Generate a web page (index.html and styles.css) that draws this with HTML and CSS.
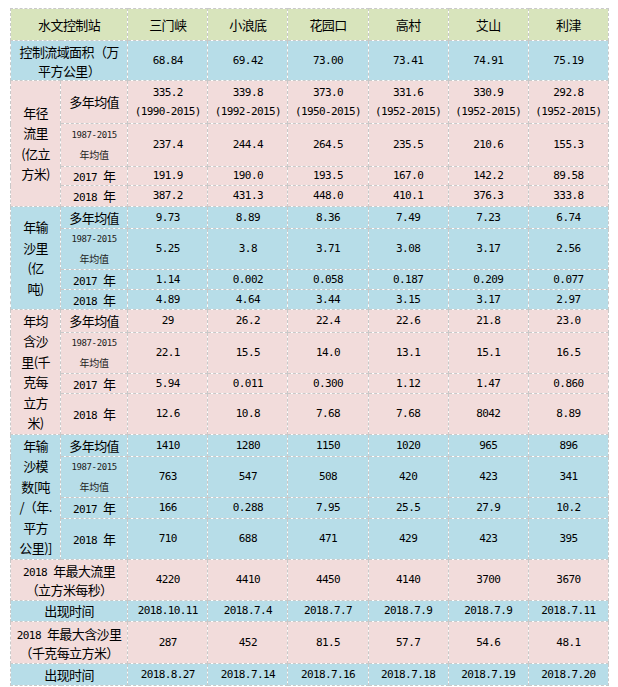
FILE: index.html
```html
<!DOCTYPE html>
<html lang="zh-CN">
<head>
<meta charset="utf-8">
<title>水文控制站</title>
<link rel="stylesheet" href="styles.css">
</head>
<body>
<table class="tbl">
  <colgroup>
    <col class="c-side"><col class="c-sub">
    <col class="c-v"><col class="c-v"><col class="c-v"><col class="c-v"><col class="c-v"><col class="c-v">
  </colgroup>
  <tr class="g h32">
    <td colspan="2" class="lab">水文控制站</td>
    <td class="lab">三门峡</td><td class="lab">小浪底</td><td class="lab">花园口</td><td class="lab">高村</td><td class="lab">艾山</td><td class="lab">利津</td>
  </tr>
  <tr class="b h40">
    <td colspan="2" class="lab two">控制流域面积（万<br>平方公里）</td>
    <td class="v">68.84</td><td class="v">69.42</td><td class="v">73.00</td><td class="v">73.41</td><td class="v">74.91</td><td class="v">75.19</td>
  </tr>

  <tr class="p h43">
    <td rowspan="4" class="side">年径<br>流里<br>(亿立<br>方米)</td>
    <td class="lab">多年均值</td>
    <td class="v two">335.2<br>(1990-2015)</td><td class="v two">339.8<br>(1992-2015)</td><td class="v two">373.0<br>(1950-2015)</td><td class="v two">331.6<br>(1952-2015)</td><td class="v two">330.9<br>(1952-2015)</td><td class="v two">292.8<br>(1952-2015)</td>
  </tr>
  <tr class="p h43">
    <td class="small"><span class="sd">1987-2015</span><span class="sc">年均值</span></td>
    <td class="v">237.4</td><td class="v">244.4</td><td class="v">264.5</td><td class="v">235.5</td><td class="v">210.6</td><td class="v">155.3</td>
  </tr>
  <tr class="p h19">
    <td class="lab"><span class="d">2017 </span>年</td>
    <td class="v">191.9</td><td class="v">190.0</td><td class="v">193.5</td><td class="v">167.0</td><td class="v">142.2</td><td class="v">89.58</td>
  </tr>
  <tr class="p h21">
    <td class="lab"><span class="d">2018 </span>年</td>
    <td class="v">387.2</td><td class="v">431.3</td><td class="v">448.0</td><td class="v">410.1</td><td class="v">376.3</td><td class="v">333.8</td>
  </tr>

  <tr class="b h22">
    <td rowspan="4" class="side">年输<br>沙里<br>(亿<br>吨)</td>
    <td class="lab">多年均值</td>
    <td class="v">9.73</td><td class="v">8.89</td><td class="v">8.36</td><td class="v">7.49</td><td class="v">7.23</td><td class="v">6.74</td>
  </tr>
  <tr class="b h41">
    <td class="small"><span class="sd">1987-2015</span><span class="sc">年均值</span></td>
    <td class="v">5.25</td><td class="v">3.8</td><td class="v">3.71</td><td class="v">3.08</td><td class="v">3.17</td><td class="v">2.56</td>
  </tr>
  <tr class="b h20">
    <td class="lab"><span class="d">2017 </span>年</td>
    <td class="v">1.14</td><td class="v">0.002</td><td class="v">0.058</td><td class="v">0.187</td><td class="v">0.209</td><td class="v">0.077</td>
  </tr>
  <tr class="b h20">
    <td class="lab"><span class="d">2018 </span>年</td>
    <td class="v">4.89</td><td class="v">4.64</td><td class="v">3.44</td><td class="v">3.15</td><td class="v">3.17</td><td class="v">2.97</td>
  </tr>

  <tr class="p h23">
    <td rowspan="4" class="side">年均<br>含沙<br>里(千<br>克每<br>立方<br>米)</td>
    <td class="lab">多年均值</td>
    <td class="v">29</td><td class="v">26.2</td><td class="v">22.4</td><td class="v">22.6</td><td class="v">21.8</td><td class="v">23.0</td>
  </tr>
  <tr class="p h41">
    <td class="small"><span class="sd">1987-2015</span><span class="sc">年均值</span></td>
    <td class="v">22.1</td><td class="v">15.5</td><td class="v">14.0</td><td class="v">13.1</td><td class="v">15.1</td><td class="v">16.5</td>
  </tr>
  <tr class="p h20">
    <td class="lab"><span class="d">2017 </span>年</td>
    <td class="v">5.94</td><td class="v">0.011</td><td class="v">0.300</td><td class="v">1.12</td><td class="v">1.47</td><td class="v">0.860</td>
  </tr>
  <tr class="p h41">
    <td class="lab"><span class="d">2018 </span>年</td>
    <td class="v">12.6</td><td class="v">10.8</td><td class="v">7.68</td><td class="v">7.68</td><td class="v">8042</td><td class="v">8.89</td>
  </tr>

  <tr class="b h22">
    <td rowspan="4" class="side">年输<br>沙模<br>数[吨<br>/（年.<br>平方<br>公里)]</td>
    <td class="lab">多年均值</td>
    <td class="v">1410</td><td class="v">1280</td><td class="v">1150</td><td class="v">1020</td><td class="v">965</td><td class="v">896</td>
  </tr>
  <tr class="b h41">
    <td class="small"><span class="sd">1987-2015</span><span class="sc">年均值</span></td>
    <td class="v">763</td><td class="v">547</td><td class="v">508</td><td class="v">420</td><td class="v">423</td><td class="v">341</td>
  </tr>
  <tr class="b h21">
    <td class="lab"><span class="d">2017 </span>年</td>
    <td class="v">166</td><td class="v">0.288</td><td class="v">7.95</td><td class="v">25.5</td><td class="v">27.9</td><td class="v">10.2</td>
  </tr>
  <tr class="b h41">
    <td class="lab"><span class="d">2018 </span>年</td>
    <td class="v">710</td><td class="v">688</td><td class="v">471</td><td class="v">429</td><td class="v">423</td><td class="v">395</td>
  </tr>

  <tr class="p h41">
    <td colspan="2" class="lab two"><span class="d">2018 </span>年最大流里<br>（立方米每秒）</td>
    <td class="v">4220</td><td class="v">4410</td><td class="v">4450</td><td class="v">4140</td><td class="v">3700</td><td class="v">3670</td>
  </tr>
  <tr class="b h21">
    <td colspan="2" class="lab">出现时间</td>
    <td class="v">2018.10.11</td><td class="v">2018.7.4</td><td class="v">2018.7.7</td><td class="v">2018.7.9</td><td class="v">2018.7.9</td><td class="v">2018.7.11</td>
  </tr>
  <tr class="p h42">
    <td colspan="2" class="lab two"><span class="d">2018 </span>年最大含沙里<br>（千克每立方米）</td>
    <td class="v">287</td><td class="v">452</td><td class="v">81.5</td><td class="v">57.7</td><td class="v">54.6</td><td class="v">48.1</td>
  </tr>
  <tr class="b h22">
    <td colspan="2" class="lab">出现时间</td>
    <td class="v">2018.8.27</td><td class="v">2018.7.14</td><td class="v">2018.7.16</td><td class="v">2018.7.18</td><td class="v">2018.7.19</td><td class="v">2018.7.20</td>
  </tr>
</table>
</body>
</html>
```

FILE: styles.css
```css
html, body {
  margin: 0;
  padding: 0;
  background: #ffffff;
}

body {
  padding: 8px 0 0 10px;
}

.tbl {
  border-collapse: collapse;
  table-layout: fixed;
  width: 599px;
  color: #000;
}

.c-side { width: 50px; }
.c-sub { width: 67px; }
.c-v { width: 80px; }

.tbl td {
  border: 1px dashed #c9c9c9;
  padding: 0;
  text-align: center;
  vertical-align: middle;
  overflow: hidden;
  white-space: nowrap;
}

.g td { background: #d8e4bc; }
.b td { background: #b7dde8; }
.p td { background: #f2dcdb; }

.h19 { height: 19px; }
.h20 { height: 20px; }
.h21 { height: 21px; }
.h22 { height: 22px; }
.h23 { height: 23px; }
.h32 { height: 32px; }
.h40 { height: 40px; }
.h41 { height: 41px; }
.h42 { height: 42px; }
.h43 { height: 43px; }

.lab {
  font-family: "Noto Sans CJK SC", sans-serif;
  font-size: 13px;
  letter-spacing: -0.6px;
  line-height: 16px;
}

.side {
  font-family: "Noto Sans CJK SC", sans-serif;
  font-size: 13px;
  letter-spacing: -0.6px;
  line-height: 20.5px;
}

.v {
  font-family: "DejaVu Sans Mono", monospace;
  font-size: 11px;
  letter-spacing: -0.6px;
  line-height: 16px;
}

.tbl .two {
  line-height: 19px;
}

.d {
  font-family: "DejaVu Sans Mono", monospace;
  font-size: 11px;
  letter-spacing: -0.6px;
  line-height: 8px;
}

.small {
  font-size: 10px;
  line-height: 10px;
  color: #222;
}

.sd {
  display: block;
  font-family: "DejaVu Sans Mono", monospace;
  font-size: 9px;
  letter-spacing: -0.4px;
  line-height: 19px;
}

.sc {
  display: block;
  font-family: "Noto Sans CJK SC", sans-serif;
  font-size: 10px;
  letter-spacing: -0.2px;
  line-height: 19px;
}
```
